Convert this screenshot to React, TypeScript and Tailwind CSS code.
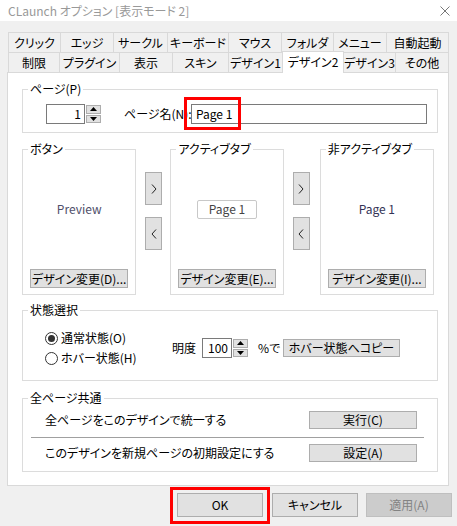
import type { ReactNode } from 'react';

const row1 = [
  { label: 'クリック', w: 'w-[52px]' },
  { label: 'エッジ', w: 'w-[53px]' },
  { label: 'サークル', w: 'w-[54px]' },
  { label: 'キーボード', w: 'w-[61px]' },
  { label: 'マウス', w: 'w-[53px]' },
  { label: 'フォルダ', w: 'w-[52px]' },
  { label: 'メニュー', w: 'w-[53px]' },
  { label: '自動起動', w: 'w-[63px]' },
];

const row2 = [
  { label: '制限', w: 'w-[51px]' },
  { label: 'プラグイン', w: 'w-[60px]' },
  { label: '表示', w: 'w-[53px]' },
  { label: 'スキン', w: 'w-[56px]' },
  { label: 'デザイン1', w: 'w-[54px]' },
  { label: 'デザイン2', w: 'w-[62px]', active: true },
  { label: 'デザイン3', w: 'w-[52px]' },
  { label: 'その他', w: 'w-[54px]' },
];

function Btn({ children, className = '', disabled = false }: { children: ReactNode; className?: string; disabled?: boolean }) {
  return (
    <button
      type="button"
      disabled={disabled}
      className={`flex items-center justify-center whitespace-nowrap border text-[12px] leading-none ${
        disabled ? 'border-[#bfbfbf] bg-[#cccccc] text-[#838383]' : 'border-[#adadad] bg-[#e1e1e1] text-black'
      } ${className}`}
    >
      {children}
    </button>
  );
}

function Triangle({ up }: { up?: boolean }) {
  return (
    <svg width="7" height="4" viewBox="0 0 7 4">
      <polygon points={up ? '0,4 7,4 3.5,0' : '0,0 7,0 3.5,4'} fill="#000" />
    </svg>
  );
}

function Spin({ value, inputClass }: { value: string; inputClass: string }) {
  return (
    <div className="flex h-[20px]">
      <div className={`flex items-center justify-end border border-[#7a7a7a] bg-white pr-[3px] text-[12px] leading-none ${inputClass}`}>
        {value}
      </div>
      <div className="flex w-[16px] flex-col gap-px py-px pl-px">
        <div className="flex flex-1 items-center justify-center border border-[#adadad] bg-[#e1e1e1]">
          <Triangle up />
        </div>
        <div className="flex flex-1 items-center justify-center border border-[#adadad] bg-[#e1e1e1]">
          <Triangle />
        </div>
      </div>
    </div>
  );
}

function Radio({ checked, label }: { checked?: boolean; label: string }) {
  return (
    <div className="flex h-[16px] items-center gap-[3px]">
      <span className="flex h-[13px] w-[13px] items-center justify-center rounded-full border border-[#333] bg-white">
        {checked ? <span className="h-[7px] w-[7px] rounded-full bg-[#333]" /> : null}
      </span>
      <span className="whitespace-nowrap text-[12px] leading-[16px]">{label}</span>
    </div>
  );
}

function Group({ label, className, children }: { label: string; className: string; children: ReactNode }) {
  return (
    <fieldset className={`border border-[#dcdcdc] px-[5px] ${className}`}>
      <legend className="whitespace-nowrap px-[2px] text-[12px] leading-[16px]">{label}</legend>
      {children}
    </fieldset>
  );
}

function Chevron({ left }: { left?: boolean }) {
  return (
    <svg width="6" height="10" viewBox="0 0 6 10">
      <polyline points={left ? '5,0.5 1,5 5,9.5' : '1,0.5 5,5 1,9.5'} fill="none" stroke="#222" strokeWidth="1" />
    </svg>
  );
}

function ArrowColumn({ className }: { className: string }) {
  return (
    <div className={`flex flex-col gap-[12px] pt-[31px] ${className}`}>
      <Btn className="h-[33px] w-[17px]">
        <Chevron />
      </Btn>
      <Btn className="h-[33px] w-[17px]">
        <Chevron left />
      </Btn>
    </div>
  );
}

function PreviewGroup({ label, width, button, children }: { label: string; width: string; button: string; children: ReactNode }) {
  return (
    <Group label={label} className={`h-[154px] ${width}`}>
      <div className="flex flex-col px-[2px]">
        <div className="flex h-[112px] items-center justify-center pb-[8px]">{children}</div>
        <Btn className="h-[19px] w-full">{button}</Btn>
      </div>
    </Group>
  );
}

export default function App() {
  return (
    <div className="flex h-[526px] w-[457px] flex-col overflow-hidden bg-[#f0f0f0] font-['Noto_Sans_CJK_JP','Noto_Sans',sans-serif] text-black [font-feature-settings:'palt']">
      <div className="flex h-[21px] items-center justify-between bg-white pl-[8px] pr-[7px]">
        <span className="whitespace-nowrap text-[12px] leading-none text-[#999]">CLaunch オプション [表示モード 2]</span>
        <svg width="10" height="10" viewBox="0 0 10 10">
          <path d="M0.5 0.5 L9.5 9.5 M9.5 0.5 L0.5 9.5" stroke="#777" strokeWidth="1" />
        </svg>
      </div>

      <div className="mt-[11px] flex pl-[8px]">
        {row1.map((t, i) => (
          <div
            key={t.label}
            className={`flex h-[20px] items-center justify-center whitespace-nowrap border-l border-t border-[#d9d9d9] text-[12px] leading-none ${t.w} ${
              i === row1.length - 1 ? 'border-r' : ''
            }`}
          >
            {t.label}
          </div>
        ))}
      </div>
      <div className="flex h-[20px] items-start pl-[8px]">
        {row2.map((t, i) =>
          t.active ? (
            <div
              key={t.label}
              className={`relative z-10 -mr-px -mt-px flex h-[22px] items-center justify-center whitespace-nowrap border-x border-t border-[#d9d9d9] bg-white pb-[2px] text-[12px] leading-none ${t.w}`}
            >
              {t.label}
            </div>
          ) : (
            <div
              key={t.label}
              className={`flex h-[20px] items-center justify-center whitespace-nowrap border-l border-t border-[#d9d9d9] text-[12px] leading-none ${t.w} ${
                i === row2.length - 1 ? 'border-r' : ''
              }`}
            >
              {t.label}
            </div>
          ),
        )}
      </div>

      <div className="ml-[7px] flex h-[414px] w-[442px] flex-col border border-[#d9d9d9] bg-white px-[14px]">
        <Group label="ページ(P)" className="mt-[8px] h-[52px] w-[416px]">
          <div className="flex items-center pl-[18px] pt-[7px]">
            <Spin value="1" inputClass="w-[39px]" />
            <span className="ml-[23px] w-[67px] whitespace-nowrap text-[12px] leading-[16px]">ページ名(N):</span>
            <div className="relative">
              <div className="flex h-[20px] w-[236px] items-center border border-[#7a7a7a] bg-white pl-[4px] text-[12px] leading-none">
                Page 1
              </div>
              <div className="absolute -left-[7px] -top-[7px] h-[33px] w-[57px] border-[3px] border-[#ff0000]" />
            </div>
          </div>
        </Group>

        <div className="mt-[8px] flex h-[154px]">
          <PreviewGroup label="ボタン" width="w-[116px]" button="デザイン変更(D)...">
            <span className="text-[12px] leading-none text-[#50506a]">Preview</span>
          </PreviewGroup>
          <ArrowColumn className="ml-[9px] mr-[8px]" />
          <PreviewGroup label="アクティブタブ" width="w-[115px]" button="デザイン変更(E)...">
            <span className="flex h-[19px] w-[60px] items-center justify-center rounded-[2px] border border-[#c8c8c8] text-[12px] leading-none text-[#444]">
              Page 1
            </span>
          </PreviewGroup>
          <ArrowColumn className="ml-[9px] mr-[10px]" />
          <PreviewGroup label="非アクティブタブ" width="w-[116px]" button="デザイン変更(I)...">
            <span className="text-[12px] leading-none text-[#333355]">Page 1</span>
          </PreviewGroup>
        </div>

        <Group label="状態選択" className="mt-[7px] h-[79px] w-[416px]">
          <div className="flex items-center pl-[17px] pt-[12px]">
            <div className="flex w-[127px] flex-col gap-[4px]">
              <Radio checked label="通常状態(O)" />
              <Radio label="ホバー状態(H)" />
            </div>
            <span className="w-[30px] whitespace-nowrap text-[12px] leading-[16px]">明度</span>
            <Spin value="100" inputClass="w-[30px]" />
            <span className="ml-[10px] w-[25px] whitespace-nowrap text-[12px] leading-[16px]">%で</span>
            <Btn className="h-[18px] w-[117px]">ホバー状態へコピー</Btn>
          </div>
        </Group>

        <Group label="全ページ共通" className="mt-[9px] h-[82px] w-[416px]">
          <div className="flex flex-col pt-[5px]">
            <div className="flex h-[18px] items-center justify-between pl-[17px] pr-[15px]">
              <span className="whitespace-nowrap text-[12px] leading-[16px]">全ページをこのデザインで統一する</span>
              <Btn className="h-[18px] w-[108px]">実行(C)</Btn>
            </div>
            <div className="ml-[3px] mr-[8px] mt-[8px] h-px bg-[#a0a0a0]" />
            <div className="mt-[6px] flex h-[18px] items-center justify-between pl-[17px] pr-[15px]">
              <span className="whitespace-nowrap text-[12px] leading-[16px]">このデザインを新規ページの初期設定にする</span>
              <Btn className="h-[18px] w-[108px]">設定(A)</Btn>
            </div>
          </div>
        </Group>
      </div>

      <div className="mt-[7px] flex justify-end gap-[8px] pr-[5px]">
        <div className="relative">
          <Btn className="h-[24px] w-[86px]">OK</Btn>
          <div className="absolute -left-[7px] -top-[6px] h-[37px] w-[100px] border-[3px] border-[#ff0000]" />
        </div>
        <Btn className="ml-px h-[24px] w-[86px]">キャンセル</Btn>
        <Btn disabled className="h-[24px] w-[86px]">
          適用(A)
        </Btn>
      </div>
    </div>
  );
}
